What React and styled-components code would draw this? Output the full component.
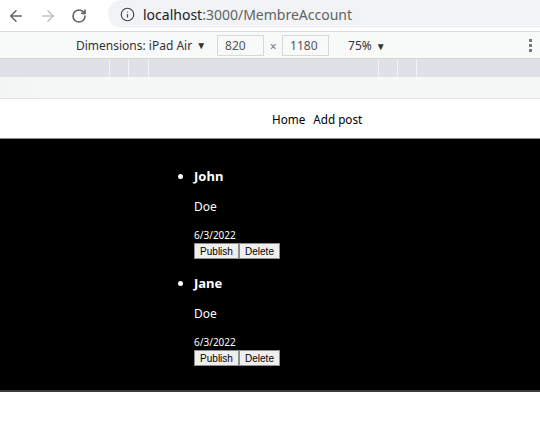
import styled, { createGlobalStyle } from "styled-components"
import { ArrowLeft, ArrowRight, RotateCw, Info } from "lucide-react"

const Global = createGlobalStyle`
    body {
        margin: 0;
        background: #fff;
        font-family: "Noto Sans", "Liberation Sans", sans-serif;
    }
`

const Page = styled.div`
    width: 540px;
    height: 443px;
    overflow: hidden;
    background: #fff;
`

const AddressRow = styled.div`
    display: flex;
    align-items: center;
    border-bottom: 1px solid #dadce0;
    padding-left: 7px;
    box-sizing: border-box;
    height: 32px;
`

const NavIcon = styled.span`
    display: flex;
    width: 32px;
    color: ${props => props.disabled ? "#bdc1c6" : "#5f6368"};
`

const UrlPill = styled.div`
    flex: 1;
    display: flex;
    align-items: center;
    height: 28px;
    margin-top: -3px;
    margin-left: 5px;
    padding-left: 12px;
    background: #f1f3f4;
    border-radius: 14px 0 0 14px;
    color: #5f6368;
    font-size: 14px;

    svg {
        margin-right: 8px;
    }
    b {
        font-weight: normal;
        color: #202124;
    }
`

const DeviceBar = styled.div`
    display: flex;
    align-items: center;
    height: 26px;
    background: #f8f9f9;
    border-bottom: 1px solid #d6d6d6;
    padding-left: 76px;
    font-size: 12px;
    color: #333;
`

const Caret = styled.span`
    font-size: 10px;
    margin-left: 4px;
`

const SizeBox = styled.div`
    width: 47px;
    height: 21px;
    box-sizing: border-box;
    border: 1px solid #d8d8d8;
    padding-left: 7px;
    line-height: 19px;
    color: #555;
    margin-left: ${props => props.first ? "11px" : "0"};
`

const Zoom = styled.span`
    margin-left: 19px;
`

const Times = styled.span`
    width: 18px;
    text-align: center;
    color: #777;
    padding-top: 3px;
`

const Kebab = styled.div`
    margin-left: auto;
    margin-right: 8px;
    display: flex;
    flex-direction: column;
    gap: 2px;

    i {
        width: 3px;
        height: 3px;
        background: #777;
    }
`

const MediaBar = styled.div`
    display: flex;
    height: 18px;
    background: #dee1e6;
`

const MediaSeg = styled.div`
    width: ${props => props.w}px;
    border-right: 1px solid #f4f4f4;
    &:last-child { flex: 1; border: none; }
`

const Gutter = styled.div`
    height: 21px;
    background: linear-gradient(90deg, #f3f4f4, #f6f7f7 10%, #f6f7f7);
    border-bottom: 1px solid #e3e3e3;
`

const Nav = styled.nav`
    display: flex;
    align-items: center;
    padding-left: 272px;
    gap: 8px;
    font-size: 11.7px;
    color: #000;
    border-bottom: 1px solid #8a8a8a;
    box-sizing: border-box;
    height: 40px;
`

const Feed = styled.ul`
    margin: 0;
    background: #000;
    color: #fff;
    padding: 28px 0 24px 194px;
    border-bottom: 2px solid #3c3c3c;
    list-style: disc;
    font-size: 12px;
`

const Post = styled.li`
    & + & {
        margin-top: 15px;
    }
    &::marker {
        font-size: 13px;
    }
`

const Name = styled.div`
    font-weight: bold;
    font-size: 13px;
    line-height: 16px;
`

const Last = styled.div`
    margin-top: 15px;
    line-height: 16px;
`

const Date = styled.div`
    margin-top: 14px;
    font-size: 10px;
    line-height: 12px;
`

const Actions = styled.div`
    display: flex;
    margin-top: 2px;
`

const Btn = styled.button`
    font-family: "Liberation Sans", sans-serif;
    font-size: 10px;
    height: 16px;
    padding: 0 5px;
    background: #efefef;
    border: 1px solid #8f8f8f;
    border-radius: 0;
    color: #000;
    width: ${props => props.w}px;
`

const posts = [
    { first: "John", last: "Doe", date: "6/3/2022" },
    { first: "Jane", last: "Doe", date: "6/3/2022" },
]

export default function App() {
    return (
        <Page>
            <Global />
            <AddressRow>
                <NavIcon><ArrowLeft size={18} strokeWidth={2} /></NavIcon>
                <NavIcon disabled><ArrowRight size={18} strokeWidth={2} /></NavIcon>
                <NavIcon><RotateCw size={16} strokeWidth={2.4} /></NavIcon>
                <UrlPill>
                    <Info size={15} strokeWidth={1.8} color="#444" />
                    <b>localhost</b>:3000/MembreAccount
                </UrlPill>
            </AddressRow>
            <DeviceBar>
                Dimensions: iPad Air<Caret>▼</Caret>
                <SizeBox first>820</SizeBox>
                <Times>×</Times>
                <SizeBox>1180</SizeBox>
                <Zoom>75%<Caret>▼</Caret></Zoom>
                <Kebab><i /><i /><i /></Kebab>
            </DeviceBar>
            <MediaBar>
                {[109, 18, 19, 229, 18, 18, 0].map((w, i) => <MediaSeg key={i} w={w} />)}
            </MediaBar>
            <Gutter />
            <Nav>
                <span>Home</span>
                <span>Add post</span>
            </Nav>
            <Feed>
                {posts.map((p, i) => (
                    <Post key={i}>
                        <Name>{p.first}</Name>
                        <Last>{p.last}</Last>
                        <Date>{p.date}</Date>
                        <Actions>
                            <Btn w={45}>Publish</Btn>
                            <Btn w={41}>Delete</Btn>
                        </Actions>
                    </Post>
                ))}
            </Feed>
        </Page>
    )
}
